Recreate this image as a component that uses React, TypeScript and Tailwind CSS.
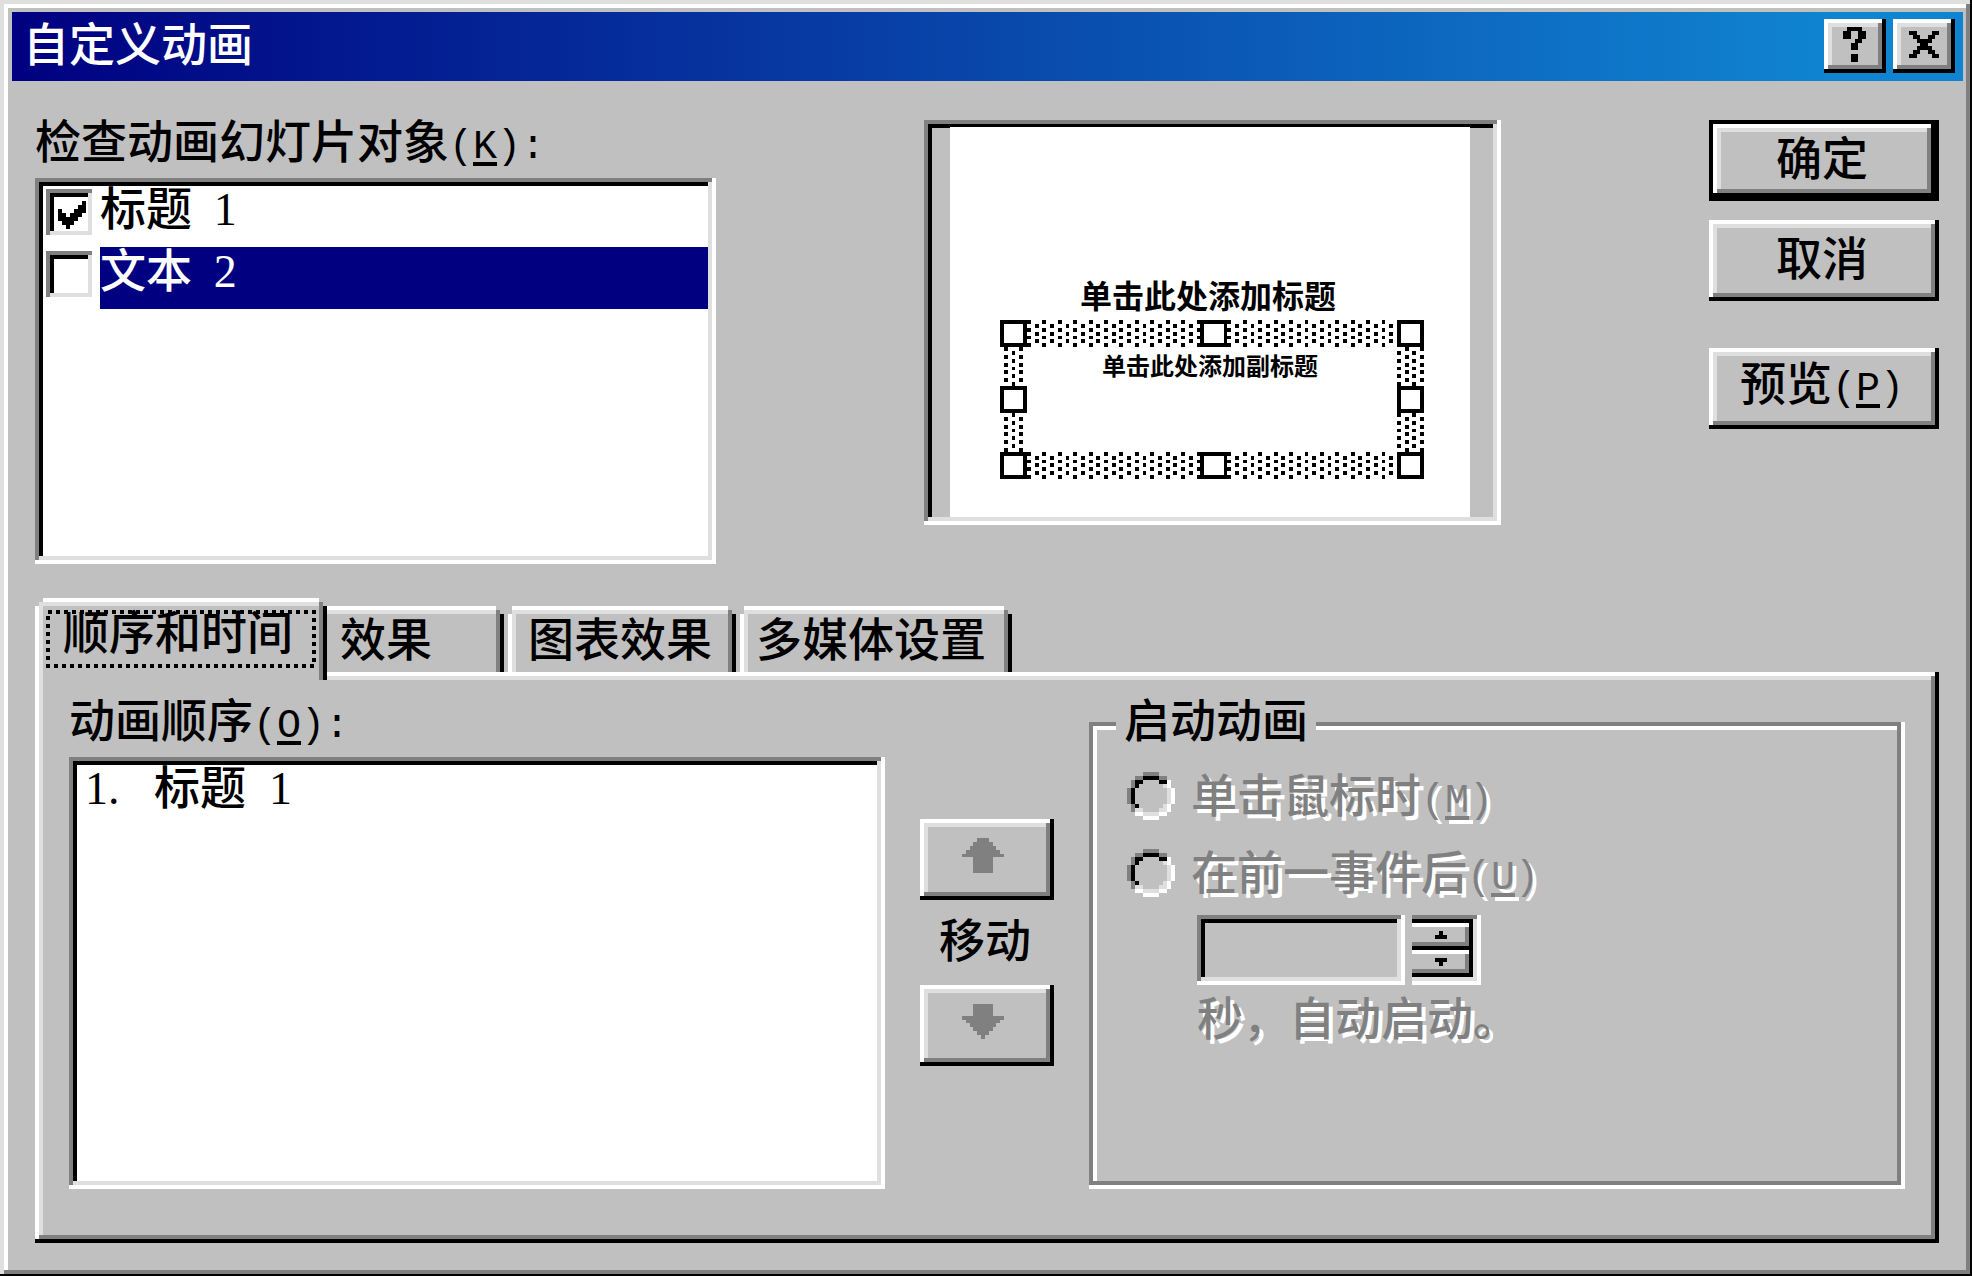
import { Fragment, type ReactNode } from "react";

const RAISED =
  "bg-[#c0c0c0] shadow-[inset_-4px_-4px_0_0_#000,inset_4px_4px_0_0_#fff,inset_-8px_-8px_0_0_#808080,inset_8px_8px_0_0_#dfdfdf]";
const RAISED_DEFAULT =
  "bg-[#c0c0c0] shadow-[inset_0_0_0_4px_#000,inset_-8px_-8px_0_0_#000,inset_8px_8px_0_0_#fff,inset_-12px_-12px_0_0_#808080,inset_12px_12px_0_0_#dfdfdf]";
const SUNKEN =
  "shadow-[inset_-4px_-4px_0_0_#fff,inset_4px_4px_0_0_#808080,inset_-8px_-8px_0_0_#dfdfdf,inset_8px_8px_0_0_#000]";
const TAB =
  "bg-[#c0c0c0] shadow-[inset_-4px_0_0_0_#000,inset_4px_4px_0_0_#fff,inset_-8px_0_0_0_#808080,inset_8px_8px_0_0_#dfdfdf]";
const TAB_FRONT =
  "[clip-path:polygon(0_8px,4px_8px,4px_4px,8px_4px,8px_0,calc(100%-8px)_0,calc(100%-8px)_4px,calc(100%-4px)_4px,calc(100%-4px)_8px,100%_8px,100%_100%,0_100%)]";
const TAB_BACK =
  "[clip-path:polygon(0_8px,4px_8px,4px_0,calc(100%-8px)_0,calc(100%-8px)_4px,calc(100%-4px)_4px,calc(100%-4px)_8px,100%_8px,100%_100%,0_100%)]";
const DISABLED = "text-[#808080] [text-shadow:4px_4px_0_#fff]";

const COLORS: Record<string, string> = {
  b: "#000000",
  g: "#808080",
  d: "#dfdfdf",
  w: "#ffffff",
};

/** Draws a small bitmap icon from rows of colour letters. */
function Bitmap({ rows, className }: { rows: string[]; className: string }) {
  return (
    <svg
      aria-hidden="true"
      className={className}
      viewBox={`0 0 ${rows[0].length} ${rows.length}`}
      preserveAspectRatio="none"
      shapeRendering="crispEdges"
    >
      {rows.map((row, y) =>
        [...row].map((c, x) =>
          c === "." ? null : <rect key={`${x}-${y}`} x={x} y={y} width="1" height="1" fill={COLORS[c]} />,
        ),
      )}
    </svg>
  );
}

const HELP = [".bbbb.", "bb..bb", "bb..bb", "...bb.", "..bb..", "..bb..", "......", "..bb..", "..bb.."];
const CLOSE = ["bb....bb", ".bb..bb.", "..bbbb..", "...bb...", "..bbbb..", ".bb..bb.", "bb....bb"];
const CHECK = ["......b", ".....bb", "b...bbb", "bb.bbb.", "bbbbb..", ".bbb...", "..b...."];
const ARROW_UP = [
  "....ggg....",
  "...ggggg...",
  "..ggggggg..",
  ".ggggggggg.",
  "ggggggggggg",
  "...ggggg...",
  "...ggggg...",
  "...ggggg...",
  "...ggggg...",
];
const ARROW_DOWN = [
  "...ggggg...",
  "...ggggg...",
  "...ggggg...",
  "ggggggggggg",
  ".ggggggggg.",
  "..ggggggg..",
  "...ggggg...",
  "....ggg....",
  ".....g.....",
];
const RADIO = [
  "....gggg....",
  "..ggbbbbgg..",
  ".gbb....bbw.",
  ".gb......dw.",
  "gb........dw",
  "gb........dw",
  "gb........dw",
  "gb........dw",
  ".gb......dw.",
  ".gdd....ddw.",
  "..wwddddww..",
  "....wwww....",
];

/** Half-width letters and punctuation beside full-width characters. */
function Latin({ children }: { children: ReactNode }) {
  return <span className="font-['Liberation_Mono',monospace] text-[40px]">{children}</span>;
}

function Num({ children }: { children: ReactNode }) {
  return <span className="font-['Liberation_Serif',serif]">{children}</span>;
}

function Mnemonic({ letter, colon = false }: { letter: string; colon?: boolean }) {
  return (
    <Latin>
      (<span className="underline decoration-4 underline-offset-4">{letter}</span>){colon ? ":" : ""}
    </Latin>
  );
}

function CheckItem({ label, num, checked, selected }: { label: string; num: string; checked: boolean; selected: boolean }) {
  return (
    <li>
      <label className="flex h-[62px]">
        <span className="relative mt-1 mr-1 ml-1 block h-[50px] w-[50px] shrink-0">
          <input
            type="checkbox"
            defaultChecked={checked}
            className={`peer block h-full w-full appearance-none bg-white ${SUNKEN}`}
          />
          <Bitmap
            rows={CHECK}
            className="pointer-events-none absolute top-3 left-3 hidden h-7 w-7 peer-checked:block"
          />
        </span>
        <span className={`h-full flex-1 whitespace-pre ${selected ? "bg-[#000080] text-white" : ""}`}>
          <span className="block h-[46px]">
            {label} <Num> {num}</Num>
          </span>
        </span>
      </label>
    </li>
  );
}

function RadioRow({ label, letter }: { label: string; letter: string }) {
  return (
    <label className="flex h-12 gap-4">
      <span className="relative mt-0.5 block h-12 w-12 shrink-0">
        <input type="radio" name="start" disabled className="absolute inset-0 h-full w-full opacity-0" />
        <Bitmap rows={RADIO} className="block h-full w-full" />
      </span>
      <span className={`mt-0.5 whitespace-nowrap ${DISABLED}`}>
        {label}
        <Mnemonic letter={letter} />
      </span>
    </label>
  );
}

function SelectionFrame() {
  const handles = [
    [0, 0],
    [52, 0],
    [103, 0],
    [0, 17],
    [103, 17],
    [0, 34],
    [52, 34],
    [103, 34],
  ];
  return (
    <svg
      aria-hidden="true"
      className="absolute top-[193px] left-[50px] h-[159px] w-[424px]"
      viewBox="0 0 110 41"
      preserveAspectRatio="none"
      shapeRendering="crispEdges"
    >
      {Array.from({ length: 41 }, (_, y) => (
        <Fragment key={y}>
          {Array.from({ length: 110 }, (_, x) => {
            const dot = y % 2 === 0 ? x % 4 === 3 : x % 4 === 1;
            const band = y < 7 || y >= 34 || x < 7 || x >= 103;
            return dot && band ? <rect key={x} x={x} y={y} width="1" height="1" /> : null;
          })}
        </Fragment>
      ))}
      {handles.map(([x, y]) => (
        <Fragment key={`${x}-${y}`}>
          <rect x={x} y={y} width="7" height="7" />
          <rect x={x + 1} y={y + 1} width="5" height="5" fill="#fff" />
        </Fragment>
      ))}
    </svg>
  );
}

export default function App() {
  return (
    <main className="flex min-h-screen w-full flex-col bg-[#c0c0c0] pt-3 pr-[9px] pb-[33px] pl-3 font-['Noto_Sans_CJK_SC',sans-serif] text-[46px] leading-[40px] font-medium text-black shadow-[inset_-2px_-2px_0_0_#000,inset_4px_4px_0_0_#dfdfdf,inset_-6px_-6px_0_0_#808080,inset_8px_8px_0_0_#fff]">
      <header className="flex h-[69px] shrink-0 items-start justify-between bg-[linear-gradient(to_right,#000080,#1084d0_93%)] pt-[7px] pr-2 pl-[11px] text-white">
        <h1 className="mt-0.5">自定义动画</h1>
        <div className="flex gap-[7px]">
          <button type="button" aria-label="帮助" className={`flex h-[54px] w-[62px] items-start pt-2 pl-[19px] ${RAISED}`}>
            <Bitmap rows={HELP} className="block h-[35px] w-[23px]" />
          </button>
          <button type="button" aria-label="关闭" className={`flex h-[54px] w-[62px] items-start pt-3 pl-4 ${RAISED}`}>
            <Bitmap rows={CLOSE} className="block h-[27px] w-[30px]" />
          </button>
        </div>
      </header>

      <div className="flex flex-1 flex-col pt-[37px] pr-6 pl-[23px]">
        <section className="flex items-start justify-between">
          <div className="w-[681px]">
            <h2 className="h-[46px] whitespace-nowrap">
              检查动画幻灯片对象
              <Mnemonic letter="K" colon />
            </h2>
            <ul className={`mt-[14px] h-[386px] bg-white p-[7px] pr-2 ${SUNKEN}`}>
              <CheckItem label="标题" num="1" checked selected={false} />
              <CheckItem label="文本" num="2" checked={false} selected />
            </ul>
          </div>

          <div className={`mt-0.5 h-[405px] w-[577px] p-[7px] pr-2 pb-2 ${SUNKEN}`}>
            <div className="relative mr-[23px] ml-[19px] h-full bg-white text-center font-bold">
              <p className="pt-[150px] pr-1 text-[32px] leading-[34px]">单击此处添加标题</p>
              <p className="pt-[40px] text-[24px] leading-[28px]">单击此处添加副标题</p>
              <SelectionFrame />
            </div>
          </div>

          <div className="mt-0.5 flex w-[230px] flex-col">
            <button type="button" className={`h-[81px] pr-1 pb-3 ${RAISED_DEFAULT}`}>
              确定
            </button>
            <button type="button" className={`mt-[19px] h-[81px] pr-1 pb-3 ${RAISED}`}>
              取消
            </button>
            <button type="button" className={`mt-[47px] h-[81px] pr-1 pb-2 whitespace-nowrap ${RAISED}`}>
              预览
              <Mnemonic letter="P" />
            </button>
          </div>
        </section>

        <div role="tablist" className="mt-[34px] flex h-[74px] items-end">
          <button
            type="button"
            role="tab"
            aria-selected="true"
            className={`relative z-10 -mb-2 flex h-[82px] items-start pt-[11px] pr-[34px] pl-7 ${TAB} ${TAB_FRONT}`}
          >
            顺序和时间
            <svg aria-hidden="true" className="absolute top-[14px] left-[13px] h-[54px] w-[266px] overflow-visible">
              <rect
                width="100%"
                height="100%"
                fill="none"
                stroke="#000"
                strokeWidth="4"
                strokeDasharray="4 4"
                shapeRendering="crispEdges"
              />
            </svg>
          </button>
          <button
            type="button"
            role="tab"
            className={`-ml-2 flex h-[66px] items-start pt-[10px] pr-[72px] pl-[21px] ${TAB} ${TAB_BACK}`}
          >
            效果
          </button>
          <button
            type="button"
            role="tab"
            className={`ml-1 flex h-[66px] items-start pt-[10px] pr-6 pl-5 ${TAB} ${TAB_BACK}`}
          >
            图表效果
          </button>
          <button
            type="button"
            role="tab"
            className={`ml-1 flex h-[66px] items-start pt-[10px] pr-[26px] pl-4 ${TAB} ${TAB_BACK}`}
          >
            多媒体设置
          </button>
        </div>

        <section role="tabpanel" className={`flex flex-1 gap-[35px] px-[34px] pt-[25px] pb-[54px] ${RAISED}`}>
          <div className="flex flex-1 flex-col">
            <h2 className="h-[46px] whitespace-nowrap">
              动画顺序
              <Mnemonic letter="O" colon />
            </h2>
            <div className={`mt-[14px] flex-1 bg-white py-[7px] pl-4 ${SUNKEN}`}>
              <ol>
                <li className="h-[46px] whitespace-pre">
                  <Num>1.   </Num>标题<Num>  1</Num>
                </li>
              </ol>
            </div>
          </div>

          <div className="flex w-[134px] shrink-0 flex-col pt-[122px]">
            <button type="button" aria-label="上移" disabled className={`flex h-[81px] justify-center pt-[19px] pr-2 ${RAISED}`}>
              <Bitmap rows={ARROW_UP} className="block h-[35px] w-[42px]" />
            </button>
            <span className="mt-[17px] mb-[28px] block pr-1 text-center">移动</span>
            <button type="button" aria-label="下移" disabled className={`flex h-[81px] justify-center pt-[19px] pr-2 ${RAISED}`}>
              <Bitmap rows={ARROW_DOWN} className="block h-[35px] w-[42px]" />
            </button>
          </div>

          <div className="flex flex-1 flex-col pt-[25px]">
            <fieldset className="relative flex-1 pt-12 pl-[38px] shadow-[inset_-4px_-4px_0_0_#fff,inset_4px_4px_0_0_#808080,inset_-8px_-8px_0_0_#808080,inset_8px_8px_0_0_#fff]">
              <legend className="absolute -top-[25px] left-[27px] bg-[#c0c0c0] px-2">启动动画</legend>
              <div className="flex flex-col gap-[29px]">
                <RadioRow label="单击鼠标时" letter="M" />
                <RadioRow label="在前一事件后" letter="U" />
              </div>
              <div className="mt-5 ml-[70px] flex gap-[7px]">
                <input
                  id="delay"
                  type="text"
                  disabled
                  className={`block h-[70px] w-[208px] bg-[#c0c0c0] px-3 ${SUNKEN}`}
                />
                <div className="h-[70px] w-[69px] pt-1 pr-2 pb-2 shadow-[inset_-4px_-4px_0_0_#fff,inset_0_4px_0_0_#808080,inset_-8px_-8px_0_0_#dfdfdf]">
                  <div className="flex h-full flex-col gap-1 bg-black py-1 pr-1">
                    <button
                      type="button"
                      aria-label="增加"
                      disabled
                      className="flex flex-1 items-center justify-center bg-[#c0c0c0] shadow-[inset_0_4px_0_0_#fff,inset_-4px_-4px_0_0_#808080]"
                    >
                      <Bitmap rows={[".b.", "bbb"]} className="block h-2 w-3" />
                    </button>
                    <button
                      type="button"
                      aria-label="减少"
                      disabled
                      className="flex flex-1 items-center justify-center bg-[#c0c0c0] shadow-[inset_0_4px_0_0_#fff,inset_-4px_-4px_0_0_#808080]"
                    >
                      <Bitmap rows={["bbb", ".b."]} className="block h-2 w-3" />
                    </button>
                  </div>
                </div>
              </div>
              <label htmlFor="delay" className={`mt-[10px] ml-[70px] block ${DISABLED}`}>
                秒，自动启动。
              </label>
            </fieldset>
          </div>
        </section>
      </div>
    </main>
  );
}
